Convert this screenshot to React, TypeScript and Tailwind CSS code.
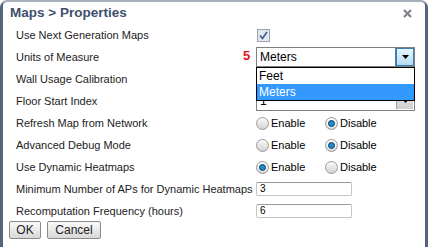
import React from 'react'

const font = { fontFamily: '"Liberation Sans", "DejaVu Sans", sans-serif' }

function Radio({ checked }: { checked?: boolean }) {
  return (
    <span className="relative inline-flex items-center justify-center w-[13px] h-[13px] rounded-full border border-[#9a9a9a] bg-linear-to-b from-[#fbfbfb] to-[#d2d2d2] shrink-0">
      {checked && (
        <span className="w-[7px] h-[7px] rounded-full bg-[#1e8ad0] border border-[#0d3f66] shadow-[0_0_0_1px_rgba(255,255,255,0.6)]" />
      )}
    </span>
  )
}

function RadioPair({ enabled }: { enabled: boolean }) {
  return (
    <div className="flex items-center">
      <div className="flex items-center w-[69px]">
        <Radio checked={enabled} />
        <span className="ml-[2px]">Enable</span>
      </div>
      <div className="flex items-center">
        <Radio checked={!enabled} />
        <span className="ml-[2px]">Disable</span>
      </div>
    </div>
  )
}

function Arrow({ active }: { active?: boolean }) {
  return (
    <span
      className={`flex items-center justify-center w-[17px] h-full border-l ${
        active
          ? 'border-[#3c7fb1] bg-linear-to-b from-[#e8f5fc] to-[#b5dcf3] outline outline-[#3c7fb1]'
          : 'border-[#a0a0a0] bg-linear-to-b from-[#e6e6e6] to-[#cfcfcf]'
      }`}
    >
      <svg width="7" height="4" viewBox="0 0 7 4">
        <path d="M0 0h7L3.5 4z" fill="#000" />
      </svg>
    </span>
  )
}

function Select({ value, active }: { value: string; active?: boolean }) {
  return (
    <div className="flex items-stretch w-[159px] h-[20px] border border-[#7f7f7f] bg-white">
      <span className="flex-1 flex items-center pl-[3px] text-[12px] text-black">{value}</span>
      <span className="p-px">
        <Arrow active={active} />
      </span>
    </div>
  )
}

function TextInput({ value }: { value: string }) {
  return (
    <div className="w-[96px] h-[14px] border border-[#c5c5c5] border-t-[#9a9a9a] rounded-[2px] bg-white flex items-center pl-[3px] text-[10px] leading-none text-black">
      {value}
    </div>
  )
}

function Row({ label, children }: { label: string; children?: React.ReactNode }) {
  return (
    <div className="grid grid-cols-[240px_1fr] items-center h-[22px]">
      <span className="text-[#222]">{label}</span>
      <div className="flex items-center">{children}</div>
    </div>
  )
}

export default function App() {
  return (
    <div style={font} className="w-[428px] h-[247px] bg-white overflow-hidden">
      <div className="h-[252px] rounded-t-[7px] bg-[#56657c] border-t-2 border-[#a7afba] px-[3px]">
        <div className="h-full bg-white rounded-t-[4px] text-[11px]">
          {/* title */}
          <div className="flex items-center justify-between h-[22px] pl-[7px] pr-[13px]">
            <span className="text-[13.5px] font-bold text-[#3e4f6d]">Maps &gt; Properties</span>
            <svg width="9" height="9" viewBox="0 0 9 9">
              <path d="M1 1l7 7M8 1L1 8" stroke="#7d8289" strokeWidth="2.2" />
            </svg>
          </div>

          <div className="pl-[13px]">
            <Row label="Use Next Generation Maps">
              <span className="ml-px flex items-center justify-center w-[13px] h-[13px] border border-[#9aa3ad] bg-[#e4e7ec]">
                <svg width="9" height="9" viewBox="0 0 9 9">
                  <path d="M1 4.5l2.5 3L8 1" stroke="#3b5998" strokeWidth="1.6" fill="none" />
                </svg>
              </span>
            </Row>
            <Row label="Units of Measure">
              <div className="relative">
                <span className="absolute -left-[13px] -top-[1px] text-[13px] font-bold text-[#e3131c]">5</span>
                <Select value="Meters" active />
                <div className="absolute left-0 top-[20px] w-[159px] border border-black bg-white z-10 text-[12px]">
                  <div className="h-[16px] flex items-center pl-[2px] text-black">Feet</div>
                  <div className="h-[16px] flex items-center pl-[2px] bg-[#3399ff] text-white">Meters</div>
                </div>
              </div>
            </Row>
            <Row label="Wall Usage Calibration">
              <Select value="" />
            </Row>
            <Row label="Floor Start Index">
              <Select value="1" />
            </Row>
            <Row label="Refresh Map from Network">
              <RadioPair enabled={false} />
            </Row>
            <Row label="Advanced Debug Mode">
              <RadioPair enabled={false} />
            </Row>
            <Row label="Use Dynamic Heatmaps">
              <RadioPair enabled />
            </Row>
            <Row label="Minimum Number of APs for Dynamic Heatmaps">
              <TextInput value="3" />
            </Row>
            <Row label="Recomputation Frequency (hours)">
              <TextInput value="6" />
            </Row>
          </div>

          <div className="flex gap-[6px] pl-[6px] -mt-px">
            <button className="w-[32px] h-[18px] border border-[#8a8a8a] rounded-[2px] bg-linear-to-b from-[#fafafa] to-[#d8d8d8] text-[12px] text-[#222] leading-none">
              OK
            </button>
            <button className="w-[54px] h-[18px] border border-[#8a8a8a] rounded-[2px] bg-linear-to-b from-[#fafafa] to-[#d8d8d8] text-[12px] text-[#222] leading-none">
              Cancel
            </button>
          </div>
        </div>
      </div>
    </div>
  )
}
